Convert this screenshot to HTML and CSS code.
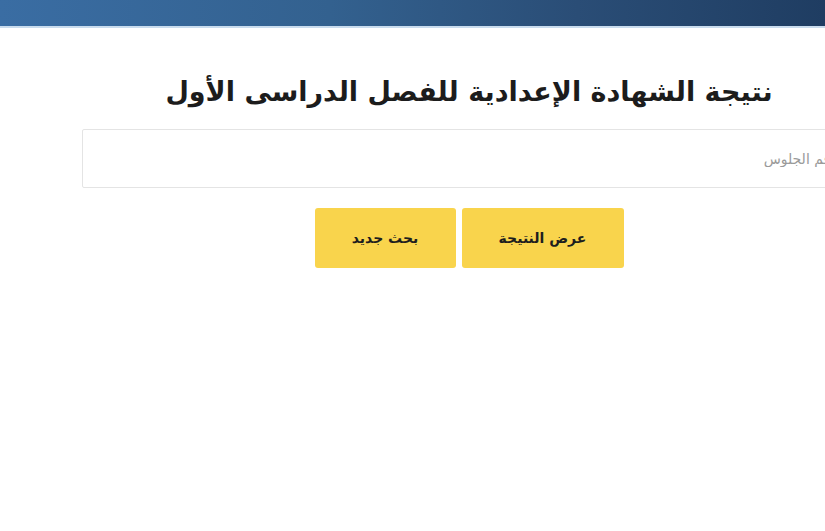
FILE: index.html
```html
<!DOCTYPE html>
<html lang="ar">
<head>
<meta charset="utf-8">
<title>نتيجة الشهادة الإعدادية</title>
<link rel="stylesheet" href="styles.css">
</head>
<body>
<header class="topbar"></header>
<main class="page">
  <h1 class="title">نتيجة الشهادة الإعدادية للفصل الدراسى الأول</h1>
  <form class="search">
    <input class="field" type="text" placeholder="رقم الجلوس">
    <div class="actions">
      <button type="button" class="btn">عرض النتيجة</button>
      <button type="button" class="btn">بحث جديد</button>
    </div>
  </form>
</main>
</body>
</html>
```
FILE: styles.css
```css
html, body {
  margin: 0;
  padding: 0;
  background: #ffffff;
  overflow: hidden;
}
body {
  font-family: "DejaVu Sans", "Noto Sans", sans-serif;
  color: #222;
}
.topbar {
  height: 26px;
  background: linear-gradient(90deg, #3a6da3 0%, #33618f 40%, #2a4d76 70%, #1f3d62 100%);
  border-bottom: 2px solid #c9dcee;
}
.page {
  width: 938px;
  direction: rtl;
  display: flex;
  flex-direction: column;
  align-items: center;
}
.title {
  margin: 44px 0 0;
  font-size: 27px;
  font-weight: bold;
  color: #1c1c1c;
  line-height: 40px;
}
.search {
  width: 774px;
  margin-top: 17px;
  display: flex;
  flex-direction: column;
  align-items: center;
}
.field {
  box-sizing: border-box;
  width: 100%;
  height: 59px;
  border: 1px solid #e4e4e4;
  border-radius: 2px;
  padding: 0 18px;
  font-family: "DejaVu Sans", sans-serif;
  font-size: 14px;
  direction: rtl;
  outline: none;
}
.field::placeholder {
  color: #9a9a9a;
}
.actions {
  margin-top: 20px;
  display: flex;
  gap: 6px;
}
.btn {
  width: 162px;
  height: 60px;
  border: none;
  border-radius: 3px;
  background: #f9d44c;
  font-family: "DejaVu Sans", sans-serif;
  font-size: 14px;
  font-weight: bold;
  color: #1e1e1e;
  cursor: pointer;
}
.btn + .btn {
  width: 141px;
}
```
